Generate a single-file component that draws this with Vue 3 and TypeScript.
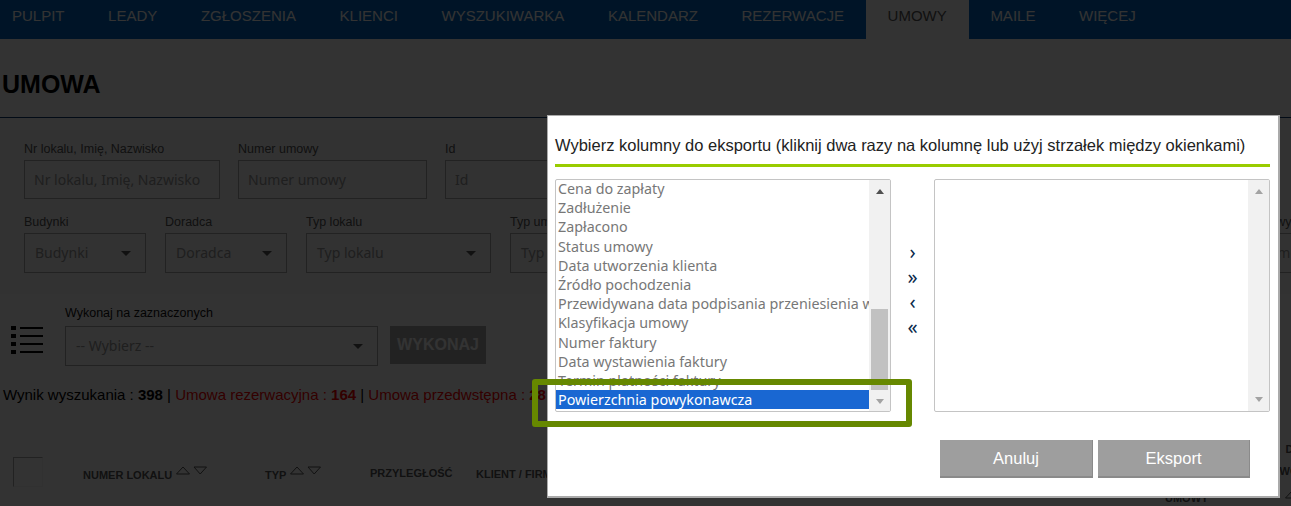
<script setup lang="ts">
const navItems = ['PULPIT', 'LEADY', 'ZGŁOSZENIA', 'KLIENCI', 'WYSZUKIWARKA', 'KALENDARZ', 'REZERWACJE', 'UMOWY', 'MAILE', 'WIĘCEJ']

const columns = [
  'Cena do zapłaty',
  'Zadłużenie',
  'Zapłacono',
  'Status umowy',
  'Data utworzenia klienta',
  'Źródło pochodzenia',
  'Przewidywana data podpisania przeniesienia własności',
  'Klasyfikacja umowy',
  'Numer faktury',
  'Data wystawienia faktury',
  'Termin płatności faktury',
  'Powierzchnia powykonawcza'
]

const arrows = ['›', '»', '‹', '«']
</script>

<template>
  <div class="page">
    <nav class="nav">
      <a v-for="item in navItems" :key="item" class="nav-item" :class="{ active: item === 'UMOWY' }">{{ item }}</a>
    </nav>

    <h1 class="title">UMOWA</h1>

    <section class="filters">
      <div class="row row-one">
        <label class="field w-196">Nr lokalu, Imię, Nazwisko<input placeholder="Nr lokalu, Imię, Nazwisko" /></label>
        <label class="field w-189">Numer umowy<input placeholder="Numer umowy" /></label>
        <label class="field w-189">Id<input placeholder="Id" /></label>
      </div>
      <div class="row row-two">
        <div class="field w-122">Budynki<div class="select">Budynki<i class="caret"></i></div></div>
        <div class="field w-122">Doradca<div class="select">Doradca<i class="caret"></i></div></div>
        <div class="field w-185">Typ lokalu<div class="select">Typ lokalu<i class="caret"></i></div></div>
        <div class="field w-185">Typ umowy<div class="select">Typ umowy<i class="caret"></i></div></div>
        <div class="field spacer"></div>
        <div class="field w-185">Status umowy<div class="select">Status umowy</div></div>
      </div>
    </section>

    <div class="bulk">
      <svg class="list-icon" width="32" height="28" viewBox="0 0 32 28">
        <rect x="0" y="0" width="5" height="4" />
        <rect x="0" y="8" width="5" height="4" />
        <rect x="0" y="16" width="5" height="4" />
        <rect x="0" y="24" width="5" height="4" />
        <rect x="9" y="1" width="23" height="2" />
        <rect x="9" y="9" width="23" height="2" />
        <rect x="9" y="17" width="23" height="2" />
        <rect x="9" y="25" width="23" height="2" />
      </svg>
      <div class="field w-313">
        Wykonaj na zaznaczonych
        <div class="select bulk-select">-- Wybierz --<i class="caret"></i></div>
      </div>
      <button class="run">WYKONAJ</button>
    </div>

    <p class="summary">
      Wynik wyszukania : <b>398</b> |
      <span class="red">Umowa rezerwacyjna : <b>164</b></span> |
      <span class="red">Umowa przedwstępna : <b>28</b></span>
    </p>

    <div class="thead">
      <div class="cell check"><span class="box"></span></div>
      <div class="cell c-number">
        NUMER LOKALU
        <svg class="sort" width="31" height="9" viewBox="0 0 31 9"><path d="M.5 8 7 1 13.5 8Z" /><path d="M18 1H30.5L24.2 8Z" /></svg>
      </div>
      <div class="cell c-type">
        TYP
        <svg class="sort" width="31" height="9" viewBox="0 0 31 9"><path d="M.5 8 7 1 13.5 8Z" /><path d="M18 1H30.5L24.2 8Z" /></svg>
      </div>
      <div class="cell c-adj">PRZYLEGŁOŚĆ</div>
      <div class="cell c-client">KLIENT / FIRMA</div>
      <div class="cell c-date">DATA<br />PODPISANIA<br />UMOWY</div>
      <div class="cell c-last">
        DATA<br />WOLNE
        <svg class="sort" width="31" height="9" viewBox="0 0 31 9"><path d="M.5 8 7 1 13.5 8Z" /></svg>
      </div>
    </div>

    <div class="overlay"></div>

    <div class="modal">
      <h2 class="modal-title">Wybierz kolumny do eksportu (kliknij dwa razy na kolumnę lub użyj strzałek między okienkami)</h2>
      <div class="pickers">
        <div class="listbox">
          <ul class="options">
            <li v-for="col in columns" :key="col" :class="{ selected: col === 'Powierzchnia powykonawcza' }">{{ col }}</li>
          </ul>
          <div class="track">
            <i class="tri up"></i>
            <div class="thumb-area"><div class="thumb"></div></div>
            <i class="tri down"></i>
          </div>
        </div>
        <div class="arrows">
          <span v-for="a in arrows" :key="a">{{ a }}</span>
        </div>
        <div class="listbox">
          <ul class="options"></ul>
          <div class="track">
            <i class="tri up light"></i>
            <div class="thumb-area"></div>
            <i class="tri down"></i>
          </div>
        </div>
      </div>
      <div class="actions">
        <button class="action">Anuluj</button>
        <button class="action">Eksport</button>
      </div>
      <div class="highlight"></div>
    </div>
  </div>
</template>

<style>
html,
body {
  margin: 0;
  overflow: hidden;
}
</style>

<style scoped>
.page {
  position: relative;
  width: 1291px;
  height: 506px;
  overflow: hidden;
  background: #fff;
  font-family: "Liberation Sans", Arial, sans-serif;
  color: #000;
}

.nav {
  display: flex;
  height: 39px;
  padding-left: 12px;
  background: #0067c0;
}

.nav-item {
  padding: 0 21.8px;
  font-size: 15px;
  line-height: 31px;
  color: #fff;
}

.nav-item:first-child {
  padding-left: 0;
}

.nav-item.active {
  background: #fff;
  color: #555;
}

.title {
  margin: 0;
  padding: 31px 0 19px 2px;
  height: 28px;
  border-bottom: 1px solid #0a3a70;
  font-size: 25px;
  line-height: 28px;
  font-weight: bold;
}

.filters {
  height: 164px;
  margin-top: 12px;
  padding: 12px 0 0 24px;
  background: #f8f8f8;
  box-sizing: border-box;
}

.row {
  display: flex;
  gap: 18px;
}

.row-two {
  gap: 19px;
  margin-top: 16px;
}

.field {
  flex: none;
  font-size: 12.5px;
  line-height: 14px;
  color: #555;
}

.field input,
.select {
  display: block;
  box-sizing: border-box;
  width: 100%;
  height: 40px;
  margin-top: 4px;
  padding: 0 9px;
  border: 1px solid #aaa;
  background: transparent;
  font-family: "Noto Sans", sans-serif;
  font-size: 14px;
  line-height: 38px;
  color: #999;
  outline: none;
}

.field input {
  height: 39px;
}

.field input::placeholder {
  color: #999;
}

.select {
  position: relative;
  padding-left: 10px;
  white-space: nowrap;
}

.caret {
  position: absolute;
  top: 17px;
  right: 14px;
  border-top: 5px solid #555;
  border-left: 5px solid transparent;
  border-right: 5px solid transparent;
}

.w-122 { width: 122px; }
.w-185 { width: 185px; }
.w-189 { width: 189px; }
.w-196 { width: 196px; }
.w-313 { width: 313px; }
.spacer { width: 480px; }

.bulk {
  display: flex;
  align-items: flex-start;
  margin-top: 12px;
  padding-left: 11px;
}

.list-icon {
  flex: none;
  margin: 20px 22px 0 0;
  fill: #000;
}

.bulk .field {
  color: #111;
}

.bulk-select {
  margin-top: 6px;
}

.run {
  flex: none;
  box-sizing: border-box;
  width: 96px;
  height: 38px;
  margin: 20px 0 0 12px;
  padding: 0;
  border: none;
  background: #aaa;
  font-family: inherit;
  font-size: 16px;
  font-weight: bold;
  color: #fff;
}

.summary {
  margin: 20px 0 0 3px;
  font-size: 15px;
  line-height: 18px;
}

.red {
  color: #f00;
}

.thead {
  display: flex;
  align-items: flex-start;
  height: 49px;
  margin-top: 53px;
  font-size: 11px;
  font-weight: bold;
  line-height: 14px;
  color: #555;
}

.cell {
  flex: none;
  box-sizing: border-box;
}

.check { width: 83px; padding-left: 13px; }
.box { display: block; width: 30px; height: 30px; border: 1px solid #aaa; box-sizing: border-box; border-right-color: #f4f4f4; border-bottom-color: #f4f4f4; }
.c-number { width: 182px; padding-top: 9px; }
.c-type { width: 105px; padding-top: 9px; }
.c-adj { width: 106px; padding-top: 9px; }
.c-client { width: 689px; padding-top: 10px; }
.c-date { width: 110px; margin-top: -4px; line-height: 18px; }
.c-last { width: 50px; margin-top: -19px; line-height: 22px; text-align: center; }

.sort {
  margin-left: 1px;
  vertical-align: 4px;
  fill: none;
  stroke: #555;
  stroke-width: 1;
}

.c-last .sort {
  display: block;
  margin: 8px auto 0;
}

.overlay {
  position: absolute;
  inset: 0;
  background: rgba(0, 0, 0, 0.8);
}

.modal {
  position: absolute;
  top: 115px;
  left: 547px;
  box-sizing: border-box;
  width: 733px;
  height: 383px;
  padding: 0 7px;
  background: #fff;
  border: 1px solid #aaa;
  border-width: 1px 2px 2px 1px;
}

.modal-title {
  box-sizing: border-box;
  width: 715px;
  height: 51px;
  margin: 0;
  padding-top: 20px;
  border-bottom: 3px solid #9c0;
  font-size: 16.5px;
  font-weight: normal;
  line-height: 18px;
  color: #222;
  white-space: nowrap;
}

.pickers {
  display: flex;
  margin-top: 12px;
}

.listbox {
  display: flex;
  box-sizing: border-box;
  width: 336px;
  height: 233px;
  overflow: hidden;
  border: 1px solid #c4c4c4;
  border-radius: 2px;
}

.options {
  flex: 1;
  min-width: 0;
  margin: -1px 0 0;
  padding: 0;
  list-style: none;
  font-family: "Noto Sans", sans-serif;
  font-size: 14.3px;
  line-height: 19.2px;
  color: #777;
}

.options li {
  padding-left: 2px;
  white-space: nowrap;
  overflow: hidden;
}

.options li.selected {
  background: #1967d2;
  color: #fff;
}

.track {
  display: flex;
  flex: none;
  flex-direction: column;
  align-items: center;
  width: 21px;
  background: #f1f1f1;
}

.tri {
  flex: none;
  margin: 9px 0;
  border-left: 4px solid transparent;
  border-right: 4px solid transparent;
}

.tri.up {
  border-bottom: 5px solid #505050;
}

.tri.up.light {
  border-bottom-color: #a3a3a3;
}

.tri.down {
  border-top: 5px solid #a3a3a3;
}

.thumb-area {
  flex: 1;
  width: 17px;
  margin-right: 1px;
}

.thumb {
  height: 81px;
  margin-top: 106px;
  background: #c1c1c1;
}

.arrows {
  display: flex;
  flex-direction: column;
  flex: none;
  align-items: center;
  box-sizing: border-box;
  width: 43px;
  padding-top: 60px;
  font-family: "Noto Sans", sans-serif;
  font-size: 20px;
  line-height: 25px;
  color: #0a2a4a;
}

.actions {
  display: flex;
  gap: 5px;
  margin-top: 28px;
  padding-left: 385px;
}

.action {
  box-sizing: border-box;
  width: 153px;
  height: 38px;
  padding: 0;
  border: none;
  border-right: 1px solid #8a8a8a;
  border-bottom: 2px solid #8a8a8a;
  background: #9e9e9e;
  font-family: inherit;
  font-size: 16.5px;
  color: #fff;
}

.action:last-child {
  width: 152px;
}

.highlight {
  position: absolute;
  top: 263px;
  left: -16px;
  box-sizing: border-box;
  width: 380px;
  height: 48px;
  border: 6px solid #668800;
  border-radius: 3px;
}
</style>
